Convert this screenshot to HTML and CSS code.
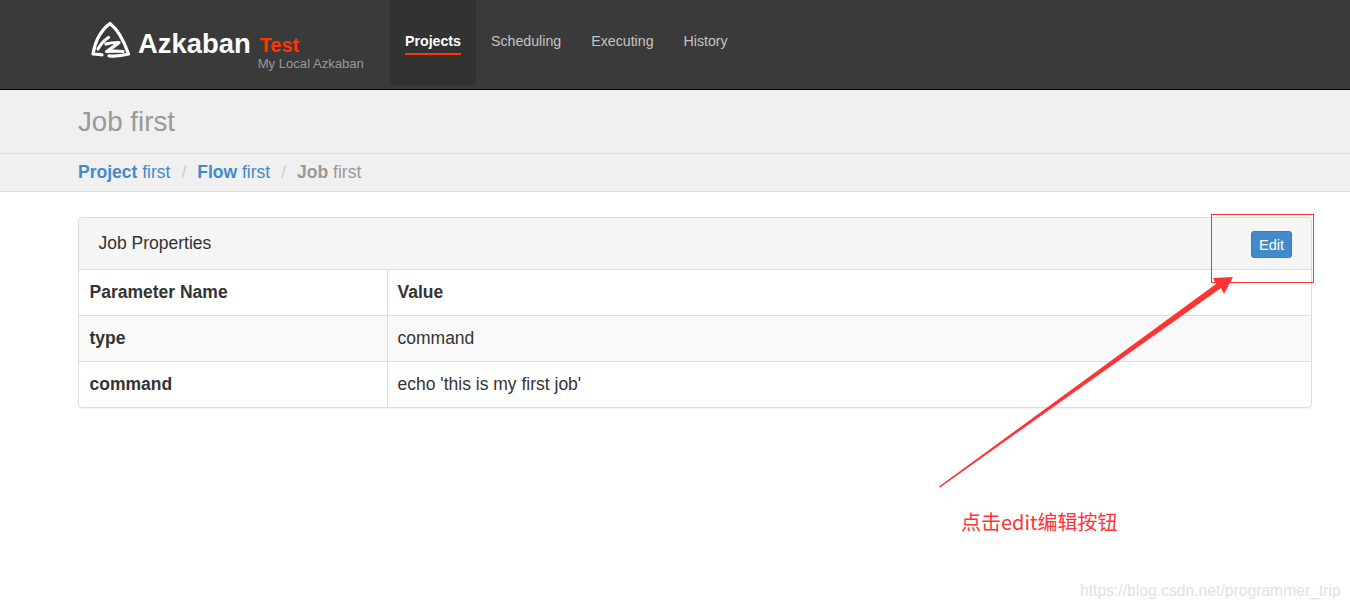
FILE: index.html
```html
<!DOCTYPE html>
<html lang="en">
<head>
<meta charset="utf-8">
<title>Job first</title>
<link rel="stylesheet" href="styles.css">
</head>
<body>
<nav class="navbar">
  <div class="brand">
    <svg class="logo" viewBox="0 0 40 38" width="40" height="38" aria-hidden="true">
      <path class="logo-stroke" d="M11 33.800 C7 33.400 4.500 33 2 33 C4 21 10 9 19 2.500 C26 8 33 20 37.500 33 C30 35 24 35.500 18 34.800"/>
      <path class="logo-stroke" d="M7 28 C9.500 23.500 13 19.500 17.500 16.500"/>
      <path class="logo-stroke" d="M15 23 C19 21.800 23.500 21.500 28 21.500 C24 25 20 27.500 15.500 30.500 C21 30 26.500 30 32 30.500"/>
    </svg>
    <span class="brand-name">Azkaban</span>
    <div class="env">
      <span class="env-name">Test</span>
      <span class="env-sub">My Local Azkaban</span>
    </div>
  </div>
  <ul class="nav">
    <li class="nav-item active"><a><span>Projects</span></a></li>
    <li class="nav-item"><a><span>Scheduling</span></a></li>
    <li class="nav-item"><a><span>Executing</span></a></li>
    <li class="nav-item"><a><span>History</span></a></li>
  </ul>
</nav>
<header class="page-header"><h1>Job first</h1></header>
<div class="crumbs">
  <a class="crumb"><strong>Project</strong> first</a>
  <span class="sep">/</span>
  <a class="crumb"><strong>Flow</strong> first</a>
  <span class="sep">/</span>
  <span class="crumb current"><strong>Job</strong> first</span>
</div>
<main class="content">
  <section class="panel">
    <div class="panel-head">
      <span class="panel-title">Job Properties</span>
      <button class="btn">Edit</button>
    </div>
    <table class="props">
      <thead><tr><th>Parameter Name</th><th>Value</th></tr></thead>
      <tbody>
        <tr class="odd"><th>type</th><td>command</td></tr>
        <tr><th>command</th><td>echo 'this is my first job'</td></tr>
      </tbody>
    </table>
  </section>
</main>
<div class="note-box"></div>
<svg class="note-arrow" width="1350" height="609" viewBox="0 0 1350 609" aria-hidden="true">
  <path class="arrow-shape" d="M939 486.500 L1216 284 L1213 278 L1233 277 L1224 294 L1221 288 L940 487.500 Z"/>
</svg>
<div class="note-text">点击edit编辑按钮</div>
<div class="watermark">https://blog.csdn.net/programmer_trip</div>
</body>
</html>
```
FILE: styles.css
```css
* { box-sizing: border-box; }
html, body { margin: 0; padding: 0; }
body {
  position: relative;
  height: 609px;
  overflow: hidden;
  background: #fff;
  color: #333;
  font-family: "Liberation Sans", Arial, sans-serif;
  font-size: 17.5px;
}
.navbar {
  display: flex;
  height: 90px;
  padding-left: 91px;
  background: #3a3a3a;
  border-bottom: 1px solid #000;
}
.brand { display: flex; width: 299px; align-items: flex-start; }
.logo { margin-top: 21px; flex: none; filter: blur(.4px); }
.logo-stroke { fill: none; stroke: #fff; stroke-width: 3.2; stroke-linejoin: round; stroke-linecap: round; }
.brand-name {
  margin: 27px 0 0 7px;
  color: #fff;
  font-size: 27.4px;
  line-height: 34px;
  font-weight: 700;
}
.env { display: flex; flex-direction: column; margin: 33px 0 0 8px; }
.env-name { margin-left: 1px; color: #ff3601; font-size: 20px; line-height: 24px; font-weight: 700; }
.env-sub { margin: 1px 0 0 -1px; color: #999; font-size: 13.1px; line-height: 12px; white-space: nowrap; }
.nav { display: flex; margin: 0; padding: 0; list-style: none; height: 86px; }
.nav-item a {
  display: block;
  height: 86px;
  padding: 32px 15px 0;
  color: #c4c4c4;
  font-size: 14.2px;
  line-height: 18px;
}
.nav-item span { display: block; height: 23px; }
.nav-item.active { background: #323232; }
.nav-item.active a { color: #fff; font-weight: 700; }
.nav-item.active span { border-bottom: 2px solid #ff3601; }
.page-header {
  height: 64px;
  padding: 16px 78px 0;
  background: #f0f0f0;
  border-bottom: 1px solid #ddd;
}
.page-header h1 { margin: 0; color: #999; font-size: 27.7px; line-height: 32px; font-weight: 400; }
.crumbs {
  display: flex;
  height: 38px;
  padding: 8px 78px 0;
  background: #f0f0f0;
  border-bottom: 1px solid #ddd;
  line-height: 21px;
}
.crumb { color: #428bca; }
.crumb.current { color: #999; }
.sep { margin: 0 11px; color: #ccc; }
.content { padding: 25px 38px 0 78px; }
.panel {
  border: 1px solid #ddd;
  border-radius: 4px;
  box-shadow: 0 1px 1px rgba(0, 0, 0, .05);
  overflow: hidden;
}
.panel-head {
  display: flex;
  justify-content: space-between;
  align-items: center;
  height: 52px;
  padding: 0 19px 0 19.500px;
  background: #f5f5f5;
  border-bottom: 1px solid #ddd;
}
.panel-title { color: #333; font-size: 17.5px; }
.btn {
  width: 41px;
  height: 27px;
  margin-top: 2px;
  padding: 0;
  color: #fff;
  background: #428bca;
  border: 1px solid #357ebd;
  border-radius: 3px;
  font-family: inherit;
  font-size: 14.5px;
}
.props { width: 100%; border-collapse: collapse; table-layout: fixed; }
.props th, .props td {
  height: 46px;
  padding: 0 10px;
  text-align: left;
  border-top: 1px solid #ddd;
  font-size: 17.5px;
}
.props thead th { height: 45px; border-top: 0; padding-top: 1px; }
.props th { font-weight: 700; }
.props th:first-child { width: 308px; padding-left: 10.500px; border-right: 1px solid #ddd; }
.props tbody th, .props tbody td { padding-top: 1px; }
.odd { background: #f9f9f9; }
.note-box {
  position: absolute;
  left: 1211px;
  top: 214px;
  width: 103px;
  height: 69px;
  border: 1px solid #f33;
}
.note-arrow { position: absolute; left: 0; top: 0; pointer-events: none; }
.arrow-shape { fill: #f33; }
.note-text {
  position: absolute;
  left: 961px;
  top: 510px;
  color: #f33;
  font-family: "Noto Sans CJK SC", "Liberation Sans", sans-serif;
  font-size: 20px;
  line-height: 24px;
  white-space: nowrap;
}
.watermark {
  position: absolute;
  left: 1080px;
  top: 582px;
  color: #e2e2e2;
  font-size: 15.7px;
  line-height: 18px;
  white-space: nowrap;
}
```
